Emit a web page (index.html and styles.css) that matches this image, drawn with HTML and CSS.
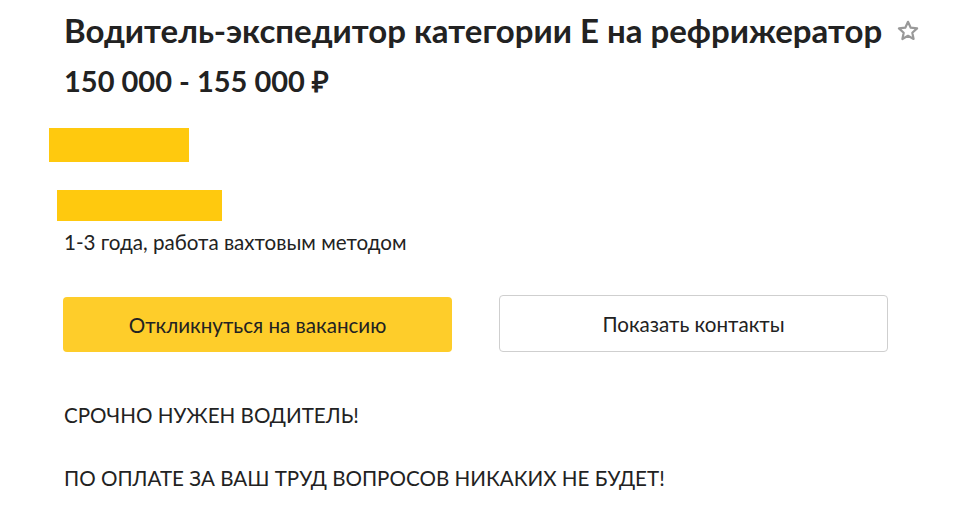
FILE: index.html
```html
<!DOCTYPE html>
<html lang="ru">
<head>
<meta charset="utf-8">
<link rel="stylesheet" href="styles.css">
</head>
<body>
<main class="vacancy">
  <div class="title-row">
    <h1 class="title">Водитель-экспедитор категории Е на рефрижератор</h1>
    <svg class="star" width="24" height="24" viewBox="0 0 24 24"><path d="M12 2.8l2.7 5.9 6.4.7-4.8 4.3 1.3 6.3L12 16.8 6.4 20l1.3-6.3-4.8-4.3 6.4-.7z" fill="none" stroke="#999" stroke-width="2.2" stroke-linejoin="round"/></svg>
  </div>
  <div class="salary">150 000 - 155 000 ₽</div>
  <div class="mask mask-1"></div>
  <div class="mask mask-2"></div>
  <div class="experience">1-3 года, работа вахтовым методом</div>
  <div class="actions">
    <button class="btn btn-primary">Откликнуться на вакансию</button>
    <button class="btn btn-secondary">Показать контакты</button>
  </div>
  <div class="description">
    <p>СРОЧНО НУЖЕН ВОДИТЕЛЬ!</p>
    <p>ПО ОПЛАТЕ ЗА ВАШ ТРУД ВОПРОСОВ НИКАКИХ НЕ БУДЕТ!</p>
  </div>
</main>
</body>
</html>
```
FILE: styles.css
```css
html, body {
  margin: 0;
  padding: 0;
  background: #fff;
}
body {
  font-family: Lato, "Open Sans", sans-serif;
  color: #222;
}
.vacancy {
  padding: 10px 0 0 64px;
  width: 880px;
}
.title-row {
  display: flex;
  align-items: center;
  gap: 14px;
}
.title {
  margin: 0;
  font-size: 33px;
  font-weight: 700;
  line-height: 40px;
  color: #222;
  white-space: nowrap;
}
.star {
  flex: none;
  margin-top: 2px;
}
.salary {
  margin-top: 15px;
  font-size: 29px;
  font-weight: 700;
  line-height: 32px;
}
.mask {
  background: #ffc90e;
}
.mask-1 {
  width: 140px;
  height: 34px;
  margin: 31px 0 0 -15px;
}
.mask-2 {
  width: 165px;
  height: 31px;
  margin: 28px 0 0 -7px;
}
.experience {
  font-size: 20.6px;
  line-height: 28px;
  margin-top: 7px;
}
.actions {
  display: flex;
  gap: 47px;
  margin: 39px 0 0 -1px;
}
.btn {
  width: 389px;
  height: 56px;
  border-radius: 4px;
  font-family: Lato, "Open Sans", sans-serif;
  font-size: 20.6px;
  color: #222;
  cursor: pointer;
}
.btn-primary {
  background: #fecd2a;
  border: none;
  margin-top: 2px;
  height: 55px;
}
.btn-secondary {
  background: #fff;
  border: 1px solid #cfcfcf;
  height: 57px;
}
.description {
  margin-top: 49px;
  font-size: 20.6px;
  line-height: 28px;
}
.description p {
  margin: 0 0 35px;
}
```
